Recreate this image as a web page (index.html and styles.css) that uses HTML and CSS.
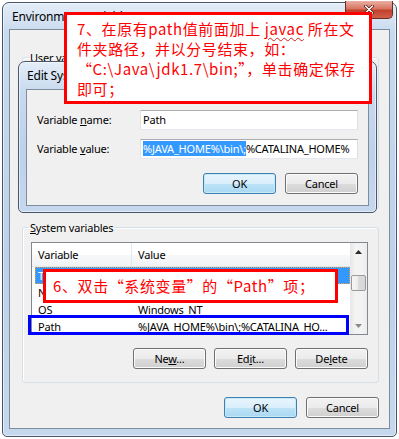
FILE: index.html
```html
<!DOCTYPE html>
<html lang="zh-CN">
<head>
    <meta charset="UTF-8">
    <meta name="viewport" content="width=device-width, initial-scale=1.0">
    <title>Environment Variables</title>
    <link rel="stylesheet" href="styles.css">
</head>
<body>
    <!-- Ventana principal -->
    <div class="window env">
        <div class="titlebar">
            <span class="title">Environment Variables</span>
            <div class="close-btn">
                <svg width="10" height="9" viewBox="0 0 10 9">
                    <path d="M1.5 1 L8.5 8 M8.5 1 L1.5 8" stroke="#4a1610" stroke-width="3" stroke-linecap="round"/>
                    <path d="M1.5 1 L8.5 8 M8.5 1 L1.5 8" stroke="#fff" stroke-width="1.6" stroke-linecap="round"/>
                </svg>
            </div>
        </div>
        <div class="client">
            <fieldset class="group user-group">
                <legend><u>U</u>ser variables for Administrator</legend>
                <div class="group-body"></div>
            </fieldset>

            <fieldset class="group sys-group">
                <legend><u>S</u>ystem variables</legend>
                <div class="listview">
                    <div class="list-main">
                        <div class="list-head">
                            <span class="col-var">Variable</span>
                            <span class="col-val">Value</span>
                        </div>
                        <div class="row selected">
                            <span class="col-var">TMP</span>
                            <span class="col-val"></span>
                        </div>
                        <div class="row">
                            <span class="col-var">NUMBER_OF_PROCESSORS</span>
                            <span class="col-val"></span>
                        </div>
                        <div class="row">
                            <span class="col-var">OS</span>
                            <span class="col-val">Windows_NT</span>
                        </div>
                        <div class="row">
                            <span class="col-var">Path</span>
                            <span class="col-val">%JAVA_HOME%\bin\;%CATALINA_HO...</span>
                        </div>
                    </div>
                    <div class="scrollbar">
                        <div class="sb-arrow">
                            <svg width="7" height="4" viewBox="0 0 7 4"><path d="M0 4 L3.5 0 L7 4Z" fill="#2b2b2b"/></svg>
                        </div>
                        <div class="sb-track"><div class="sb-thumb"></div></div>
                        <div class="sb-arrow">
                            <svg width="7" height="4" viewBox="0 0 7 4"><path d="M0 0 L3.5 4 L7 0Z" fill="#8a8a8a"/></svg>
                        </div>
                    </div>
                </div>
                <div class="btn-row">
                    <button class="btn">Ne<u>w</u>...</button>
                    <button class="btn">Ed<u>i</u>t...</button>
                    <button class="btn">De<u>l</u>ete</button>
                </div>
            </fieldset>

            <div class="btn-row footer">
                <button class="btn default">OK</button>
                <button class="btn">Cancel</button>
            </div>
        </div>
    </div>

    <!-- Dialogo de edicion -->
    <div class="window edit-dlg">
        <div class="titlebar">
            <span class="title">Edit System Variable</span>
        </div>
        <div class="edit-body">
            <div class="field-grid">
                <label>Variable <u>n</u>ame:</label>
                <div class="textbox">Path</div>
                <label>Variable <u>v</u>alue:</label>
                <div class="textbox"><span class="sel">%JAVA_HOME%\bin\;</span>%CATALINA_HOME%</div>
            </div>
            <div class="btn-row dlg-buttons">
                <button class="btn default">OK</button>
                <button class="btn">Cancel</button>
            </div>
        </div>
    </div>

    <!-- Anotaciones -->
    <div class="note note-7">
        7、在原有path值前面加上 <span class="spell">javac</span> 所在文<br>
        件夹路径，并以分号结束，如：<br>
        “C:\Java\jdk1.7\bin;”，单击确定保存<br>
        即可；
    </div>
    <div class="note note-6">6、双击“系统变量”的“Path”项；</div>
    <div class="mark-path"></div>
</body>
</html>
```

FILE: styles.css
```css
* {
    box-sizing: border-box;
}

body {
    margin: 0;
    width: 399px;
    height: 439px;
    position: relative;
    overflow: hidden;
    background: #fff;
    font-family: 'Noto Sans', 'Liberation Sans', sans-serif;
    font-size: 11px;
    letter-spacing: -0.2px;
    color: #000;
}

/* Marco de ventana */
.window {
    border: 1px solid #47576a;
    border-radius: 7px 7px 5px 5px;
    background: linear-gradient(#e4edf8, #c8daef 30px, #bdd1ea 60%, #c6d8ee);
    box-shadow: inset 0 0 0 1px rgba(255,255,255,0.5);
    display: flex;
    flex-direction: column;
}

.env {
    margin: 2px 0 0 2px;
    width: 395px;
    height: 435px;
    padding: 0 6px 7px;
}

.titlebar {
    height: 26px;
    flex-shrink: 0;
    display: flex;
    align-items: center;
    justify-content: space-between;
}

.title {
    font-size: 12px;
    padding-left: 3px;
}

.close-btn {
    align-self: flex-start;
    width: 48px;
    height: 18px;
    margin: -2px -3px 0 0;
    border: 1px solid #6b2a22;
    border-top: none;
    border-radius: 0 0 5px 5px;
    background: linear-gradient(#eab0a3, #d87563 45%, #c2402c 55%, #d0604a);
    display: flex;
    align-items: center;
    justify-content: center;
}

.client {
    flex: 1;
    border: 1px solid #7f8c9b;
    background: #f0f0f0;
    padding: 20px 10px 0 12px;
}

/* Group box */
.group {
    margin: 0;
    min-width: 0;
    border: 1px solid #d5dfe5;
    border-radius: 3px;
    box-shadow: inset 1px 1px #fff;
    padding: 0 10px 0 8px;
}

.group legend {
    padding: 0 1px;
    margin-left: -2px;
    line-height: 15px;
}

.user-group .group-body {
    height: 143px;
}

.sys-group {
    margin-top: 11px;
    padding-top: 7px;
    padding-bottom: 13px;
}

/* Lista */
.listview {
    height: 93px;
    border: 1px solid #828790;
    background: #fff;
    display: flex;
}

.list-main {
    flex: 1;
    overflow: hidden;
}

.list-head {
    height: 24px;
    display: grid;
    grid-template-columns: 100px 1fr;
    background: linear-gradient(#fff, #fff 50%, #f7f8fa 50%, #f1f2f4);
    border-bottom: 1px solid #e3e5e8;
}

.list-head span {
    line-height: 23px;
    padding-left: 6px;
}

.list-head .col-var {
    border-right: 1px solid #e3e8ee;
}

.row {
    height: 17px;
    margin-left: 3px;
    display: grid;
    grid-template-columns: 97px 1fr;
    line-height: 17px;
}

.row span {
    white-space: nowrap;
    overflow: hidden;
}

.row .col-var { padding-left: 3px; }
.row .col-val { padding-left: 6px; }

.row.selected {
    background: #3399ff;
    color: #fff;
    outline: 1px dotted #f0a040;
    outline-offset: -1px;
}

.scrollbar {
    width: 17px;
    display: flex;
    flex-direction: column;
    background: linear-gradient(90deg, #e6e6e6, #f3f3f3 30%, #f3f3f3 70%, #ececec);
}

.sb-arrow {
    height: 17px;
    display: flex;
    align-items: center;
    justify-content: center;
}

.sb-track {
    flex: 1;
    padding: 15px 1px 0;
}

.sb-thumb {
    height: 16px;
    border: 1px solid #9b9b9b;
    border-radius: 2px;
    background: linear-gradient(90deg, #f6f6f6, #ebebeb 50%, #dcdcdc 50%, #d6d6d6);
}

/* Botones */
.btn-row {
    display: flex;
    justify-content: flex-end;
    gap: 8px;
}

.sys-group .btn-row {
    margin-top: 13px;
}

.btn {
    width: 73px;
    height: 21px;
    padding: 0;
    border: 1px solid #707070;
    border-radius: 3px;
    background: linear-gradient(#f2f2f2, #ebebeb 50%, #dddddd 50%, #cfcfcf);
    box-shadow: inset 0 0 0 1px #fbfbfb;
    font: inherit;
    letter-spacing: inherit;
    color: #000;
}

.btn.default {
    border-color: #3c7fb1;
    background: linear-gradient(#e9f5fc, #d9effb 50%, #bee3f7 50%, #a9d8f3);
    box-shadow: inset 0 0 0 1px #c8e8f8;
}

.footer {
    margin-top: 14px;
    gap: 9px;
}

/* Dialogo Edit */
.edit-dlg {
    position: absolute;
    left: 18px;
    top: 61px;
    width: 359px;
    height: 152px;
    padding: 0 7px 6px;
}

.edit-dlg .titlebar {
    height: 27px;
}

.edit-dlg .title {
    padding-left: 1px;
}

.edit-body {
    flex: 1;
    border: 1px solid #7f8c9b;
    background: #f0f0f0;
    padding: 20px 10px 0;
}

.field-grid {
    display: grid;
    grid-template-columns: 103px 1fr;
    row-gap: 9px;
    align-items: center;
}

.field-grid label {
    line-height: 20px;
}

.textbox {
    height: 20px;
    border: 1px solid;
    border-color: #abadb3 #dbdfe6 #e3e9ef #e2e3ea;
    background: #fff;
    padding: 0 2px;
    line-height: 18px;
    white-space: nowrap;
    overflow: hidden;
}

.sel {
    background: #3399ff;
    color: #fff;
}

.dlg-buttons {
    margin-top: 14px;
    gap: 9px;
}

/* Notas rojas */
.note {
    position: absolute;
    border: 3px solid #ff0000;
    background: #fff;
    color: #ff0000;
    font-family: 'Noto Sans CJK SC', sans-serif;
    font-size: 15px;
    letter-spacing: 0.6px;
    white-space: nowrap;
}

.note-7 {
    left: 64px;
    top: 12px;
    width: 308px;
    height: 92px;
    padding: 4px 0 0 10px;
    line-height: 20px;
}

.note-6 {
    left: 43px;
    top: 269px;
    width: 295px;
    height: 34px;
    padding-left: 7px;
    line-height: 28px;
}

.spell {
    text-decoration: underline wavy #d02020;
    text-decoration-thickness: 1px;
    text-underline-offset: 2px;
}

.mark-path {
    position: absolute;
    left: 28px;
    top: 315px;
    width: 321px;
    height: 20px;
    border: 3px solid #0000ff;
}
```
